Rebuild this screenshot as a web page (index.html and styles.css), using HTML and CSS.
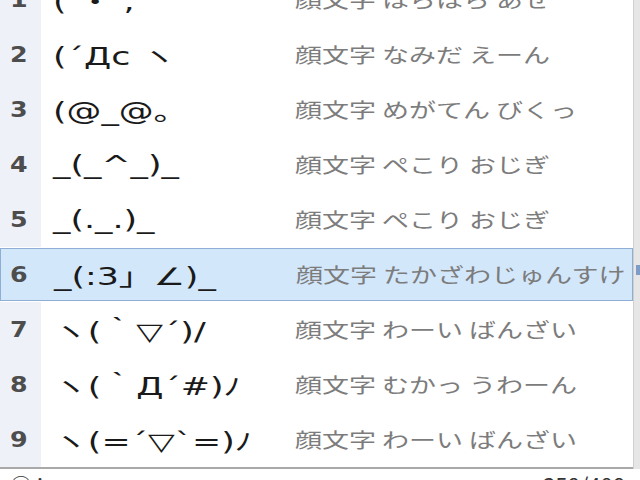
FILE: index.html
```html
<!DOCTYPE html>
<html lang="ja">
<head>
<meta charset="utf-8">
<link rel="stylesheet" href="styles.css">
</head>
<body>
<div class="window">
  <div class="main">
    <div class="list">
      <div class="row"><span class="num"><b>1</b></span><span class="kao"><b>( ・ ;</b></span><span class="desc"><b>顔文字 はらはら あせ</b></span></div>
      <div class="row"><span class="num"><b>2</b></span><span class="kao"><b>(´Дc ヽ</b></span><span class="desc"><b>顔文字 なみだ えーん</b></span></div>
      <div class="row"><span class="num"><b>3</b></span><span class="kao"><b>(@_@。</b></span><span class="desc"><b>顔文字 めがてん びくっ</b></span></div>
      <div class="row"><span class="num"><b>4</b></span><span class="kao"><b>_(_^_)_</b></span><span class="desc"><b>顔文字 ぺこり おじぎ</b></span></div>
      <div class="row"><span class="num"><b>5</b></span><span class="kao"><b>_(._.)_</b></span><span class="desc"><b>顔文字 ぺこり おじぎ</b></span></div>
      <div class="row selected"><span class="num"><b>6</b></span><span class="kao"><b>_(:3」∠)_</b></span><span class="desc"><b>顔文字 たかざわじゅんすけ</b></span></div>
      <div class="row"><span class="num"><b>7</b></span><span class="kao"><b>ヽ(｀▽´)/</b></span><span class="desc"><b>顔文字 わーい ばんざい</b></span></div>
      <div class="row"><span class="num"><b>8</b></span><span class="kao"><b>ヽ(｀Д´#)ﾉ</b></span><span class="desc"><b>顔文字 むかっ うわーん</b></span></div>
      <div class="row"><span class="num"><b>9</b></span><span class="kao"><b>ヽ(=´▽`=)ﾉ</b></span><span class="desc"><b>顔文字 わーい ばんざい</b></span></div>
    </div>
    <div class="status"><span class="mode">○ ⁞</span><span class="count">358/408</span></div>
  </div>
  <div class="scrollbar"><div class="thumb"></div></div>
</div>
</body>
</html>
```
FILE: styles.css
```css
html, body {
  margin: 0;
  padding: 0;
  background: #ffffff;
  overflow: hidden;
}
.window {
  width: 640px;
  height: 480px;
  display: flex;
  overflow: hidden;
  font-family: "Noto Sans CJK JP", "Noto Sans", sans-serif;
}
.main {
  flex: 1;
  display: flex;
  flex-direction: column;
  margin-top: -28px;
}
.list {
  border-bottom: 2px solid #a9a9a9;
}
.row {
  height: 55px;
  display: grid;
  grid-template-columns: 41px 242px 1fr;
  align-items: center;
  box-sizing: border-box;
}
.row b {
  display: inline-block;
  font-weight: inherit;
  transform-origin: left center;
  white-space: nowrap;
}
.num {
  height: 100%;
  display: flex;
  align-items: center;
  padding-left: 10px;
  background: #eef1f8;
  font-family: "DejaVu Sans", sans-serif;
  font-weight: 700;
  font-size: 22px;
  color: #4d4d4d;
}
.num b {
  transform: scaleX(1.15);
}
.kao {
  padding-left: 12px;
  font-family: "DejaVu Sans", "Noto Sans CJK JP", sans-serif;
  font-size: 24px;
  color: #1a1a1a;
  white-space: nowrap;
}
.kao b {
  transform: scaleX(1.45);
}
.desc {
  padding-left: 12px;
  font-size: 20px;
  color: #7c7c7c;
  white-space: nowrap;
}
.desc b {
  transform: scaleX(1.35);
}
.row.selected {
  background: #d3e7fb;
  border: 1px solid #8eaed6;
  margin: 1px 0;
  height: 53px;
}
.row.selected .num {
  background: transparent;
  padding-left: 9px;
}
.status {
  display: flex;
  justify-content: space-between;
  padding: 2px 8px 0 10px;
  font-size: 22px;
  line-height: 26px;
  color: #333;
}
.scrollbar {
  width: 7px;
  height: 469px;
  background: #e6e6e6;
  border-left: 1px solid #cfcfcf;
  padding-top: 265px;
  box-sizing: border-box;
}
.thumb {
  height: 10px;
  margin-left: 2px;
  background: #7e9cc5;
}
```
